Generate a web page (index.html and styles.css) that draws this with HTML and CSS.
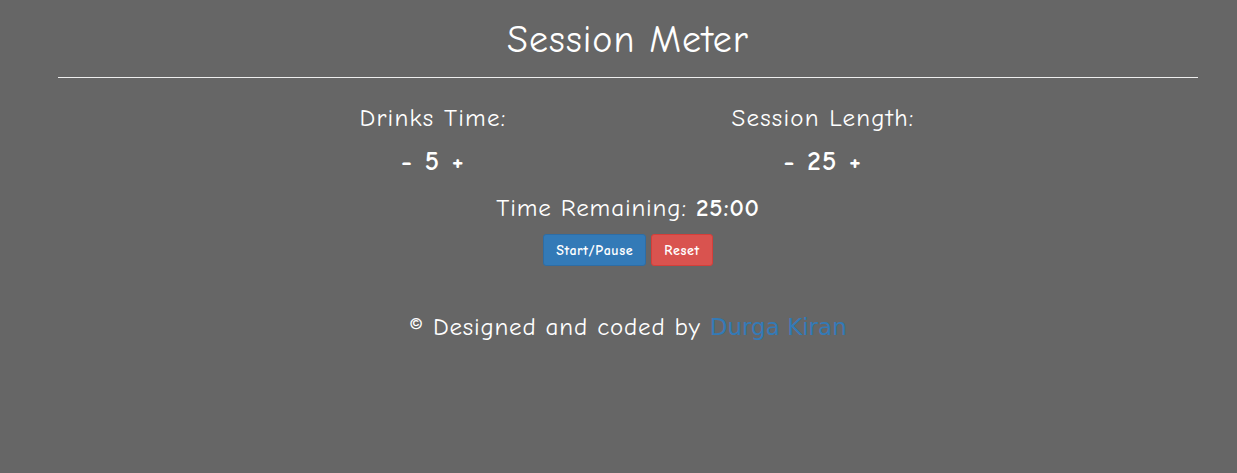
FILE: index.html
```html
<!DOCTYPE html>
<html lang="en">
<head>
<meta charset="utf-8">
<title>Session Meter</title>
<link rel="stylesheet" href="styles.css">
</head>
<body>
<div class="page">
  <div class="container">
    <h1 class="title">Session Meter</h1>
    <hr class="divider">
    <div class="settings">
      <div class="setting">
        <h3 class="setting-label">Drinks Time:</h3>
        <div class="setting-value"><span class="ctrl">-</span> <span class="num">5</span> <span class="ctrl">+</span></div>
      </div>
      <div class="setting">
        <h3 class="setting-label">Session Length:</h3>
        <div class="setting-value"><span class="ctrl">-</span> <span class="num">25</span> <span class="ctrl">+</span></div>
      </div>
    </div>
    <h3 class="remaining">Time Remaining: <strong class="clock">25:00</strong></h3>
    <div class="actions">
      <button class="btn btn-primary" type="button">Start/Pause</button>
      <button class="btn btn-danger" type="button">Reset</button>
    </div>
    <p class="footer">© Designed and coded by <a class="author" href="#">Durga Kiran</a></p>
  </div>
</div>
</body>
</html>
```
FILE: styles.css
```css
html, body {
  margin: 0;
  padding: 0;
}
body {
  background: #666666;
  color: #ffffff;
  font-family: "Comic Sans MS", "Comic Neue", "Open Sans", sans-serif;
  height: 473px;
}
.page {
  padding-left: 19px;
}
.container {
  width: 1140px;
  margin: 0 auto;
  text-align: center;
}
.title {
  margin: 0;
  padding-top: 20px;
  font-size: 38px;
  line-height: 40px;
  font-weight: 400;
  letter-spacing: 1px;
}
.divider {
  margin: 17px 0 0;
  border: 0;
  border-top: 1px solid #eeeeee;
  height: 0;
}
.settings {
  display: flex;
  justify-content: center;
  margin-top: 25px;
}
.setting {
  width: 390px;
}
.setting-label {
  margin: 0;
  font-size: 25px;
  line-height: 30px;
  font-weight: 400;
  letter-spacing: 1.2px;
}
.setting-value {
  margin-top: 14px;
  font-size: 27px;
  line-height: 30px;
  font-weight: 700;
  letter-spacing: 1.5px;
}
.remaining {
  margin: 16px 0 0;
  font-size: 25px;
  line-height: 30px;
  font-weight: 400;
  letter-spacing: 0.85px;
}
.clock {
  font-weight: 700;
}
.actions {
  margin-top: 11px;
  display: flex;
  justify-content: center;
  gap: 5px;
}
.btn {
  height: 32px;
  padding: 0 12px;
  font-family: inherit;
  font-size: 14px;
  font-weight: 700;
  letter-spacing: 0.6px;
  color: #ffffff;
  border-radius: 3px;
  border: 1px solid transparent;
  cursor: pointer;
}
.btn-primary {
  background: #337ab7;
  border-color: #2e6da4;
}
.btn-danger {
  background: #d9534f;
  border-color: #d43f3a;
}
.footer {
  margin: 46px 0 0;
  font-size: 25px;
  line-height: 30px;
  letter-spacing: 0.8px;
}
.author {
  color: #337ab7;
  text-decoration: none;
  font-family: "DejaVu Sans", Verdana, sans-serif;
  font-size: 23px;
  letter-spacing: 0;
}
```
